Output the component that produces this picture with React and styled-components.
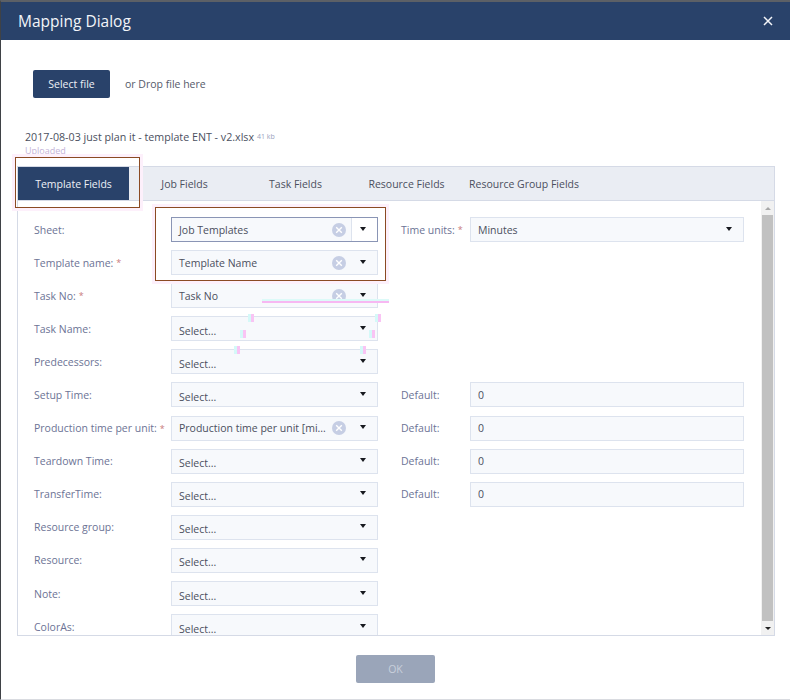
import React from 'react';
import styled, { createGlobalStyle } from 'styled-components';

const GlobalStyle = createGlobalStyle`
  html, body {
    margin: 0;
    padding: 0;
    background: #fff;
  }
  * {
    box-sizing: border-box;
  }
`;

const Window = styled.div`
  position: relative;
  width: 790px;
  height: 700px;
  display: flex;
  flex-direction: column;
  overflow: hidden;
  background: #fff;
  border-top: 2px solid #5c6066;
  border-left: 1px solid #3f4246;
  border-bottom: 1px solid #d9dbe0;
  font-family: 'Open Sans', 'Noto Sans', sans-serif;
  font-size: 10.5px;
  color: #4b4f5e;
`;

const Header = styled.div`
  flex: none;
  height: 38px;
  padding: 0 17px 0 17px;
  display: flex;
  align-items: center;
  justify-content: space-between;
  background: #29426a;
  color: #f2f5f9;
`;

const Title = styled.div`
  font-size: 15.5px;
`;

const CloseButton = styled.svg`
  width: 10px;
  height: 10px;
  stroke: #f4f6f9;
  stroke-width: 1.5;
`;

const UploadRow = styled.div`
  flex: none;
  margin: 30px 0 0 32px;
  height: 28px;
  display: flex;
  align-items: center;
  gap: 15px;
`;

const SelectFileButton = styled.div`
  width: 77px;
  height: 28px;
  display: flex;
  align-items: center;
  justify-content: center;
  border-radius: 2px;
  background: #29426a;
  color: #eef1f6;
`;

const DropHint = styled.span`
  color: #555a6a;
`;

const FileInfo = styled.div`
  flex: none;
  margin: 32px 0 0 24px;
  height: 36px;
  line-height: 13px;
  font-size: 10.7px;
`;

const FileSize = styled.span`
  margin-left: 3px;
  font-size: 7px;
  color: #9aa2bd;
  vertical-align: 2px;
`;

const FileStatus = styled.div`
  color: #c4b4d8;
  font-size: 9px;
`;

const Panel = styled.div`
  flex: none;
  width: 758px;
  height: 470px;
  margin-left: 16px;
  display: flex;
  flex-direction: column;
  border: 1px solid #d5dae6;
`;

const TabBar = styled.div`
  flex: none;
  height: 34px;
  display: flex;
  background: #eaedf3;
  border-bottom: 1px solid #d5dae6;
`;

const Tab = styled.div`
  min-width: 111px;
  padding: 0 7px;
  display: flex;
  align-items: center;
  justify-content: center;
  background: ${(p) => (p.$active ? '#29426a' : 'transparent')};
  color: ${(p) => (p.$active ? '#eef1f6' : '#4b4f5e')};
`;

const PanelBody = styled.div`
  flex: 1;
  min-height: 0;
  display: flex;
  overflow: hidden;
`;

const Form = styled.div`
  flex: 1;
  padding: 16px 0 0 16px;
  display: grid;
  grid-template-columns: 137px 207px 92px 274px;
  grid-auto-rows: 25px;
  row-gap: 8.1px;
  align-content: start;
`;

const Label = styled.div`
  display: flex;
  align-items: center;
  color: #6c7395;
  white-space: nowrap;
  margin-left: ${(p) => (p.$side ? '23px' : '0')};
`;

const Required = styled.span`
  margin-left: 3px;
  font-size: 9px;
  color: #c9797c;
`;

const SelectBox = styled.div`
  height: 25px;
  display: flex;
  align-items: center;
  background: #f7f9fc;
  border: 1px solid ${(p) => (p.$focused ? '#8a95b5' : '#dde3ee')};
  color: #4b4f5e;
`;

const SelectValue = styled.div`
  flex: 1;
  min-width: 0;
  padding-left: 7px;
  padding-top: ${(p) => (p.$placeholder ? '4px' : '0')};
  white-space: nowrap;
  overflow: hidden;
`;

const ClearIcon = styled.svg`
  flex: none;
  width: 14px;
  height: 14px;
  margin-right: 5px;
`;

const CaretCell = styled.div`
  flex: none;
  width: 26px;
  height: 100%;
  display: flex;
  align-items: center;
  justify-content: center;
  padding: 0 3px 2px 0;
  background: ${(p) => (p.$focused ? '#fff' : 'transparent')};
  border-left: ${(p) => (p.$focused ? '1px solid #dde3ee' : '1px solid transparent')};
`;

const Caret = styled.div`
  width: 0;
  height: 0;
  border-left: 3.5px solid transparent;
  border-right: 3.5px solid transparent;
  border-top: 4px solid #17191f;
`;

const DefaultInput = styled.div`
  height: 25px;
  padding-left: 7px;
  display: flex;
  align-items: center;
  background: #f7f9fc;
  border: 1px solid #dde3ee;
`;

const Scrollbar = styled.div`
  flex: none;
  width: 13px;
  display: flex;
  flex-direction: column;
  background: #f1f1f1;
`;

const ScrollArrow = styled.div`
  flex: none;
  height: 14px;
  display: flex;
  align-items: center;
  justify-content: center;
`;

const ScrollCaret = styled.div`
  width: 0;
  height: 0;
  border-left: 3px solid transparent;
  border-right: 3px solid transparent;
  border-top: ${(p) => (p.$up ? 'none' : '3px solid #222')};
  border-bottom: ${(p) => (p.$up ? '3px solid #a8a8a8' : 'none')};
`;

const ScrollThumb = styled.div`
  flex: 1;
  margin: 0 1px;
  background: #c1c1c1;
`;

const Footer = styled.div`
  flex: 1;
  display: flex;
  justify-content: center;
  align-items: flex-start;
  padding: 19px 0 0 0;
`;

const OkButton = styled.div`
  width: 79px;
  height: 28px;
  display: flex;
  align-items: center;
  justify-content: center;
  border-radius: 2px;
  background: #9aa5b9;
  color: #c9d0dc;
`;

// red annotation boxes drawn on top of the screenshot
const Callout = styled.div`
  position: absolute;
  border: 1.5px solid #8b4b23;
  box-shadow: 0 0 0 3px #fdf0fb;
  pointer-events: none;
`;

const TabCallout = styled(Callout)`
  left: 14px;
  top: 155px;
  width: 125px;
  height: 51px;
`;

const FieldCallout = styled(Callout)`
  left: 154px;
  top: 205px;
  width: 231px;
  height: 74px;
`;

// faint ghost marks left behind on the capture
const GhostLine = styled.div`
  position: absolute;
  left: 261px;
  top: 299px;
  width: 127px;
  height: 1.5px;
  background: #f7b8f2;
  box-shadow: 0 -2px 0 #dcfaf8;
`;

const GhostTick = styled.div`
  position: absolute;
  width: 3px;
  height: 8px;
  background: #f9c4f4;
  box-shadow: -3px 0 0 #d5f9f8;
`;

const TABS = ['Template Fields', 'Job Fields', 'Task Fields', 'Resource Fields', 'Resource Group Fields'];

const ROWS = [
  { label: 'Sheet:', value: 'Job Templates', focused: true, side: 'units' },
  { label: 'Template name:', required: true, value: 'Template Name' },
  { label: 'Task No:', required: true, value: 'Task No' },
  { label: 'Task Name:' },
  { label: 'Predecessors:' },
  { label: 'Setup Time:', side: 'default' },
  { label: 'Production time per unit:', required: true, value: 'Production time per unit [mi...', side: 'default' },
  { label: 'Teardown Time:', side: 'default' },
  { label: 'TransferTime:', side: 'default' },
  { label: 'Resource group:' },
  { label: 'Resource:' },
  { label: 'Note:' },
  { label: 'ColorAs:' },
];

const TICKS = [
  [250, 312], [377, 312], [242, 328], [371, 328], [236, 344], [362, 344],
];

const Clear = () => (
  <ClearIcon viewBox="0 0 14 14">
    <circle cx="7" cy="7" r="7" fill="#c6cee4" />
    <path d="M4.2 4.2l5.6 5.6M9.8 4.2l-5.6 5.6" stroke="#fff" strokeWidth="1.4" />
  </ClearIcon>
);

const Select = ({ value, focused }) => (
  <SelectBox $focused={focused}>
    <SelectValue $placeholder={!value}>{value || 'Select...'}</SelectValue>
    {value && <Clear />}
    <CaretCell $focused={focused}>
      <Caret />
    </CaretCell>
  </SelectBox>
);

const SideField = ({ type }) => {
  if (type === 'units') {
    return (
      <>
        <Label $side>
          Time units:<Required>*</Required>
        </Label>
        <SelectBox>
          <SelectValue>Minutes</SelectValue>
          <CaretCell>
            <Caret />
          </CaretCell>
        </SelectBox>
      </>
    );
  }
  if (type === 'default') {
    return (
      <>
        <Label $side>Default:</Label>
        <DefaultInput>0</DefaultInput>
      </>
    );
  }
  return (
    <>
      <div />
      <div />
    </>
  );
};

const App = () => (
  <Window>
    <GlobalStyle />
    <Header>
      <Title>Mapping Dialog</Title>
      <CloseButton viewBox="0 0 10 10">
        <path d="M1 1l8 8M9 1l-8 8" />
      </CloseButton>
    </Header>

    <UploadRow>
      <SelectFileButton>Select file</SelectFileButton>
      <DropHint>or Drop file here</DropHint>
    </UploadRow>

    <FileInfo>
      2017-08-03 just plan it - template ENT - v2.xlsx<FileSize>41 kb</FileSize>
      <FileStatus>Uploaded</FileStatus>
    </FileInfo>

    <Panel>
      <TabBar>
        {TABS.map((tab, i) => (
          <Tab key={tab} $active={i === 0}>
            {tab}
          </Tab>
        ))}
      </TabBar>
      <PanelBody>
        <Form>
          {ROWS.map((row) => (
            <React.Fragment key={row.label}>
              <Label>
                {row.label}
                {row.required && <Required>*</Required>}
              </Label>
              <Select value={row.value} focused={row.focused} />
              <SideField type={row.side} />
            </React.Fragment>
          ))}
        </Form>
        <Scrollbar>
          <ScrollArrow>
            <ScrollCaret $up />
          </ScrollArrow>
          <ScrollThumb />
          <ScrollArrow>
            <ScrollCaret />
          </ScrollArrow>
        </Scrollbar>
      </PanelBody>
    </Panel>

    <Footer>
      <OkButton>OK</OkButton>
    </Footer>

    <TabCallout />
    <FieldCallout />
    <GhostLine />
    {TICKS.map(([x, y]) => (
      <GhostTick key={`${x}-${y}`} style={{ left: x, top: y }} />
    ))}
  </Window>
);

export default App;
